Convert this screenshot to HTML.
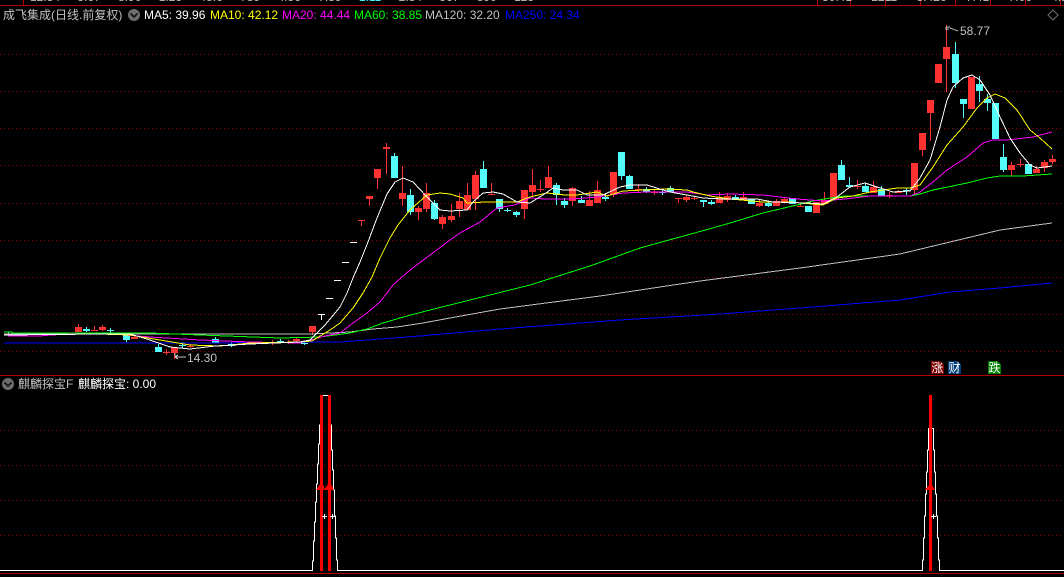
<!DOCTYPE html>
<html><head><meta charset="utf-8"><style>
html,body{margin:0;padding:0;background:#000;width:1064px;height:577px;overflow:hidden}
body{position:relative;font-family:"Liberation Sans","WenQuanYi Zen Hei","Noto Sans CJK SC",sans-serif;font-size:12px;line-height:14px}
.t{position:absolute;white-space:nowrap}
svg{position:absolute;left:0;top:0}
.g{position:absolute;left:0;width:1064px;height:1px;background-image:linear-gradient(90deg,#8c0000 1px,transparent 1px);background-size:4px 1px}
.b{width:13px;height:13px;top:361px;color:#fff;text-align:center;line-height:13px;position:absolute;font-family:"WenQuanYi Zen Hei","Noto Sans CJK SC",sans-serif;clip-path:polygon(0 0,70% 0,100% 25%,100% 100%,0 100%)}
</style></head><body>
<div class="g" style="top:54px"></div><div class="g" style="top:91px"></div><div class="g" style="top:128px"></div><div class="g" style="top:165px"></div><div class="g" style="top:203px"></div><div class="g" style="top:240px"></div><div class="g" style="top:277px"></div><div class="g" style="top:314px"></div><div class="g" style="top:351px"></div><div class="g" style="top:430px"></div><div class="g" style="top:465px"></div><div class="g" style="top:500px"></div><div class="g" style="top:535px"></div>
<svg width="1064" height="577" viewBox="0 0 1064 577" fill="none" shape-rendering="crispEdges">
<!-- top frame -->
<path stroke="#b00000" d="M0 5.5H1064M23.5 0V5M817.5 0V5M850.5 0V5M885.5 0V5M920.5 0V5M955.5 0V5M990.5 0V5M1025.5 0V5M1060.5 0V5"/>
<path stroke="#b00000" d="M0 375.5H1064M0 573.5H1064"/>
<!-- red wicks -->
<path stroke="#ff3232" d="M78.5 324V332M94.5 326V331M102.5 325V331M134.5 336V339M166.5 349V355M174.5 347V359M190.5 344V348M272.5 340V345M288.5 340V344M296.5 338V342M312.5 326V335M361.5 220V226M369.5 196V206M377.5 169V189M386.5 143V174M402.5 166V206M418.5 206V220M426.5 183V212M442.5 215V229M451.5 204V222M459.5 193V217M467.5 183V210M475.5 171V210M491.5 183V195M524.5 190V219M532.5 169V196M540.5 180V192M548.5 166V188M572.5 187V206M589.5 191V206M597.5 181V203M613.5 172V197M638.5 184V192M654.5 189V195M678.5 198V203M686.5 195V202M694.5 196V200M719.5 192V203M727.5 193V202M743.5 192V200M759.5 200V207M776.5 199V206M784.5 197V203M800.5 203V207M816.5 202V213M824.5 192V204M833.5 173V200M857.5 180V189M873.5 181V193M889.5 192V198M898.5 190V193M914.5 163V194M922.5 133V156M930.5 100V141M938.5 64V83M946.5 25V92M971.5 77V109M1011.5 162V176M1020.5 159V167M1036.5 166V173M1044.5 160V172M1052.5 155V164"/>
<!-- red bodies -->
<path fill="#ff3232" d="M75 327h7v5h-7zM91 330h7v1h-7zM99 327h7v3h-7zM131 337h7v2h-7zM163 352h7v1h-7zM171 347h7v6h-7zM187 346h7v1h-7zM269 342h7v1h-7zM285 342h7v1h-7zM293 339h7v2h-7zM309 326h7v6h-7zM358 220h7v1h-7zM366 196h7v3h-7zM374 169h7v9h-7zM383 147h7v2h-7zM399 193h7v6h-7zM415 208h7v4h-7zM423 193h7v16h-7zM439 217h7v7h-7zM448 216h7v4h-7zM456 201h7v8h-7zM464 195h7v15h-7zM472 175h7v24h-7zM488 194h7v1h-7zM521 190h7v19h-7zM529 185h7v7h-7zM537 189h7v1h-7zM545 177h7v11h-7zM569 188h7v13h-7zM586 200h7v6h-7zM594 190h7v13h-7zM610 172h7v23h-7zM635 189h7v1h-7zM651 192h7v1h-7zM675 198h7v1h-7zM683 197h7v3h-7zM691 198h7v1h-7zM716 197h7v6h-7zM724 196h7v4h-7zM740 197h7v3h-7zM756 203h7v3h-7zM773 201h7v5h-7zM781 199h7v4h-7zM797 206h7v1h-7zM813 202h7v11h-7zM821 200h7v4h-7zM830 173h7v27h-7zM854 186h7v1h-7zM870 187h7v6h-7zM886 195h7v1h-7zM895 191h7v2h-7zM911 163h7v27h-7zM919 133h7v17h-7zM927 100h7v13h-7zM935 64h7v19h-7zM943 47h7v12h-7zM968 77h7v32h-7zM1008 165h7v5h-7zM1017 164h7v1h-7zM1033 169h7v4h-7zM1041 162h7v6h-7zM1049 159h7v3h-7z"/>
<!-- white dashes -->
<path stroke="#fff" d="M350 242.5h7M342 262.5h7M334 280.5h7M326 298.5h7M318 314.5h7M321.5 314V320"/>
<!-- cyan wicks -->
<path stroke="#54fcfc" d="M8.5 332V336M86.5 327V332M110.5 328V333M126.5 334V342M158.5 344V352M182.5 342V348M215.5 337V343M231.5 342V347M280.5 339V343M304.5 341V345M394.5 153V178M410.5 189V215M434.5 200V220M483.5 161V188M499.5 199V212M507.5 208V212M516.5 211V217M556.5 183V205M564.5 198V208M581.5 196V203M605.5 193V201M621.5 152V180M629.5 175V189M646.5 187V193M662.5 189V195M670.5 186V192M703.5 200V207M711.5 200V205M735.5 195V200M751.5 199V204M768.5 202V207M792.5 198V204M808.5 206V212M841.5 160V180M849.5 177V187M865.5 183V192M881.5 186V196M906.5 188V195M955.5 42V88M963.5 99V118M979.5 76V102M987.5 94V111M995.5 103V139M1003.5 144V172M1028.5 164V174"/>
<!-- cyan bodies -->
<path fill="#54fcfc" d="M5 334h7v1h-7zM83 329h7v2h-7zM107 330h7v1h-7zM123 334h7v6h-7zM155 347h7v5h-7zM179 345h7v1h-7zM212 339h7v4h-7zM228 344h7v2h-7zM277 341h7v1h-7zM301 343h7v1h-7zM391 156h7v22h-7zM407 195h7v17h-7zM431 203h7v16h-7zM480 169h7v19h-7zM496 199h7v10h-7zM504 210h7v1h-7zM513 212h7v3h-7zM553 185h7v10h-7zM561 201h7v4h-7zM578 200h7v3h-7zM602 197h7v2h-7zM618 152h7v24h-7zM626 176h7v13h-7zM643 189h7v3h-7zM659 192h7v1h-7zM667 188h7v4h-7zM700 200h7v2h-7zM708 202h7v2h-7zM732 197h7v3h-7zM748 199h7v5h-7zM765 203h7v3h-7zM789 198h7v6h-7zM805 206h7v6h-7zM838 165h7v15h-7zM846 185h7v2h-7zM862 186h7v6h-7zM878 189h7v7h-7zM903 190h7v1h-7zM952 54h7v29h-7zM960 99h7v5h-7zM976 84h7v7h-7zM984 99h7v4h-7zM992 103h7v36h-7zM1000 157h7v13h-7zM1025 164h7v10h-7z"/>
<!-- MA lines -->
<polyline stroke="#0000ff" points="4,343 200,343 340,342 420,336 500,329 620,320 720,314 800,308 900,300 950,292 1000,288 1052,283"/>
<polyline stroke="#c0c0c0" points="4,334 120,334 200,334 310,334 350,332 373,329 397,327 423,323 450,318 500,309 600,296 700,281 800,268 900,254 950,242 1000,230 1052,223"/>
<polyline stroke="#00ff00" points="200,335 280,338 320,337 350,333 367,329 383,323 407,316 430,310 450,305 470,300 530,285 590,266 640,248 709,229 730,223 763,213 797,205 813,201 830,198 845,196 870,196 910,196 920,194 933,190 943,188 967,183 987,178 1000,176 1023,176 1052,174"/>
<polyline stroke="#ff00ff" points="8,336 40,336 50,335 100,333 150,337 200,340 250,342 300,343 325,336 340,333 353,323 367,313 380,302 393,285 410,270 430,255 450,240 460,233 480,222 497,208 515,205 530,198 545,199 573,199 597,197 623,193 647,192 687,192 707,195 730,194 763,195 797,199 823,201 845,199 870,196 910,196 920,192 933,182 947,170 967,157 983,143 993,140 1007,140 1033,137 1052,132"/>
<polyline stroke="#ffff00" points="4,335 100,334 130,335 160,340 190,345 220,346 250,343 300,342 312,341 330,330 340,323 353,308 363,293 372,277 380,258 390,238 398,225 410,210 427,195 440,193 450,194 463,198 467,203 485,202 517,202 530,197 547,193 565,195 577,195 597,192 607,196 623,191 643,190 667,189 687,190 693,192 710,196 730,199 763,202 790,202 823,205 837,198 853,196 870,192 897,188 910,188 920,185 933,167 947,145 963,127 977,108 987,98 995,94 1005,98 1017,110 1030,130 1040,138 1052,149"/>
<polyline stroke="#ffffff" points="4,335 100,334 130,334 150,340 170,347 190,349 215,346 250,344 300,342 310,340 325,325 340,307 347,293 353,278 360,262 368,242 377,218 387,194 395,182 403,178 413,182 427,197 440,210 450,211 467,210 473,202 483,193 493,192 503,194 517,202 530,203 543,195 553,188 563,190 577,190 587,195 603,195 620,187 630,185 647,185 663,190 670,192 687,195 703,198 723,199 757,199 773,202 807,203 823,204 837,197 850,187 865,183 877,187 893,192 910,191 920,178 930,160 940,127 947,100 953,87 963,78 972,75 980,80 990,95 1000,117 1010,138 1020,153 1030,165 1037,168 1052,166"/>
<polyline stroke="#00ff00" points="4,332 12,332 12,333 100,333 150,333 200,335"/>
<!-- price markers -->
<path stroke="#c0c0c0" d="M946 27h4M946 27v3M946 29h3M950 28l8 3M175 357h11M175 357l3-2M175 357l3 2M175 353v3"/>
<!-- lower panel -->
<path stroke="#fff" d="M0 570.5H312.5V561H313.5V541H314.5V522H315.5V502H316.5V484H317.5V464H318.5V444H319.5V425H320.5V395.5H330.5V425H331.5V450H332.5V470H333.5V490H334.5V516H335.5V538H336.5V560H337.5V570.5H922.5V560H923.5V538H924.5V516H925.5V494H926.5V472H927.5V450H928.5V428.5H933.5V450H934.5V472H935.5V494H936.5V516H937.5V538H938.5V560H939.5V570.5H1064"/>
<path fill="#ff0000" d="M320 395h3v176h-3zM328 395h3v176h-3zM929 395h3v176h-3zM316 490l4-6h3l2 6zM324 490l4-6h3l3 6zM925 490l4-5h3l3 5z"/>
<path stroke="#fff" d="M322 516.5h5M324.5 514v5M330 516.5h5M332.5 514v5M931 516.5h5M933.5 514v5"/>
<!-- control icons -->
<circle cx="134" cy="15" r="6" fill="#6e6e6e" shape-rendering="auto"/>
<path stroke="#111" stroke-width="1.6" d="M130.5 13.5l3.5 3.5 3.5-3.5" shape-rendering="auto"/>
<circle cx="8" cy="384" r="6" fill="#6e6e6e" shape-rendering="auto"/>
<path stroke="#111" stroke-width="1.6" d="M4.500 382.500l3.500 3.500 3.500-3.500" shape-rendering="auto"/>
<path stroke="#707070" d="M1053 10l5 5-5 5-5-5z" shape-rendering="auto"/>
</svg>
<!-- clipped top row -->
<div class="t" style="left:30px;top:-10px;color:#c0c0c0;word-spacing:14px">12.34 5.67 8.90 1.23 45.6 789 4.56 7.89 <span style="color:#54fcfc">1.11</span> 2.34 567 890 123</div>
<div class="t" style="left:822px;top:-10px;color:#c0c0c0;word-spacing:16px">30.41 2211 3.426 7.41 7.06 4.1 2.2</div>
<div class="t" style="left:3px;top:8px;color:#c0c0c0">成飞集成(日线.前复权)</div>
<div class="t" style="left:144px;top:8px;color:#fff">MA5: 39.96</div>
<div class="t" style="left:210px;top:8px;color:#ff0">MA10: 42.12</div>
<div class="t" style="left:282px;top:8px;color:#f0f">MA20: 44.44</div>
<div class="t" style="left:354px;top:8px;color:#0f0">MA60: 38.85</div>
<div class="t" style="left:425px;top:8px;color:#c0c0c0">MA120: 32.20</div>
<div class="t" style="left:505px;top:8px;color:#00f">MA250: 24.34</div>
<div class="t" style="left:960px;top:24px;color:#c0c0c0">58.77</div>
<div class="t" style="left:187px;top:351px;color:#c0c0c0">14.30</div>
<div class="t" style="left:18px;top:377px;color:#c0c0c0">麒麟探宝F</div>
<div class="t" style="left:78px;top:377px;color:#fff">麒麟探宝: 0.00</div>
<div class="b" style="left:931px;background:#800000">涨</div>
<div class="b" style="left:948px;background:#003d7a">财</div>
<div class="b" style="left:988px;background:#008000">跌</div>
</body></html>
